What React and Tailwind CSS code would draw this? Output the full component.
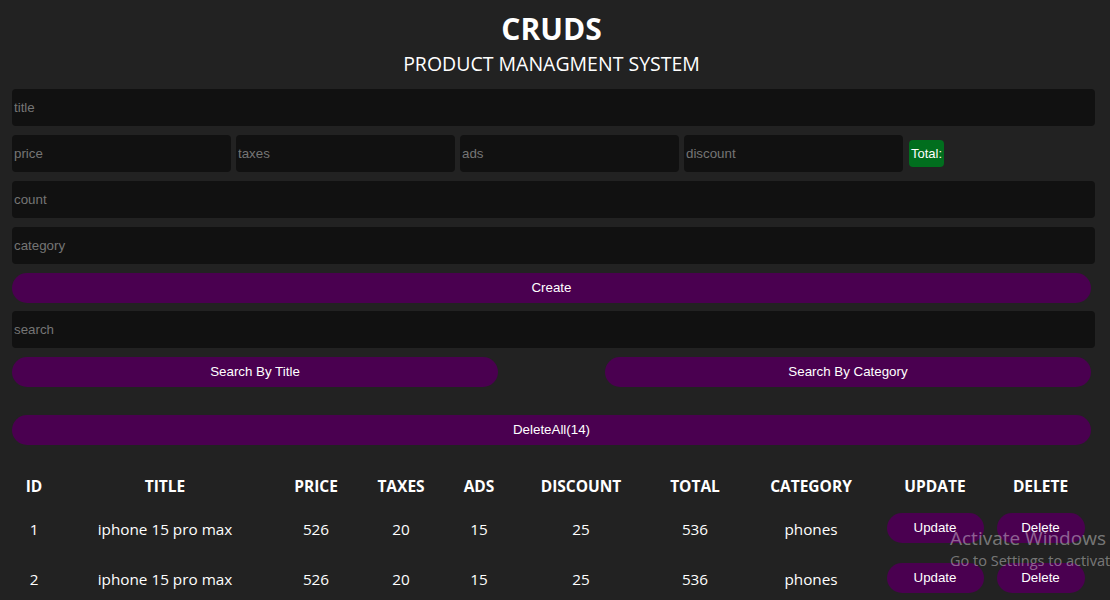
import React from "react";

const cols = [44, 218, 84, 86, 70, 134, 94, 138, 110, 101];
const heads = ["ID", "TITLE", "PRICE", "TAXES", "ADS", "DISCOUNT", "TOTAL", "CATEGORY", "UPDATE", "DELETE"];
const rows = [
  ["1", "iphone 15 pro max", "526", "20", "15", "25", "536", "phones"],
  ["2", "iphone 15 pro max", "526", "20", "15", "25", "536", "phones"],
];

const inputCls =
  "block h-[37px] rounded-[4px] bg-[#111111] pl-[2px] text-[13.33px] text-white outline-none placeholder:text-[#757575] [font-family:'Liberation_Sans',Arial,sans-serif]";
const btnCls =
  "block h-[30px] rounded-[20px] bg-[#4a0050] text-[13.33px] text-white [font-family:'Liberation_Sans',Arial,sans-serif]";

export default function App() {
  return (
    <div className="relative min-h-[600px] w-[1110px] overflow-hidden bg-[#222222] pl-[12px] pr-[19px] text-white [font-family:'Open_Sans',sans-serif]">
      <div className="pt-[10px] text-center">
        <h2 className="text-[30px] font-bold leading-[38px]">CRUDS</h2>
        <p className="mt-[4px] text-[19.5px] leading-[24px]">PRODUCT MANAGMENT SYSTEM</p>
      </div>

      <input className={inputCls + " mt-[13px] w-[1083px]"} placeholder="title" />

      <div className="mt-[9px] flex items-center gap-[5px]">
        <input className={inputCls + " w-[219px]"} placeholder="price" />
        <input className={inputCls + " w-[219px]"} placeholder="taxes" />
        <input className={inputCls + " w-[219px]"} placeholder="ads" />
        <input className={inputCls + " w-[219px]"} placeholder="discount" />
        <div className="ml-[1px] flex h-[27px] w-[35px] items-center justify-center rounded-[4px] bg-[#016e1e] text-[13px] [font-family:'Liberation_Sans',Arial,sans-serif]">
          Total:
        </div>
      </div>

      <input className={inputCls + " mt-[9px] w-[1083px]"} placeholder="count" />
      <input className={inputCls + " mt-[9px] w-[1083px]"} placeholder="category" />

      <button className={btnCls + " mt-[9px] w-full"}>Create</button>

      <input className={inputCls + " mt-[8px] w-[1083px]"} placeholder="search" />

      <div className="mt-[9px] flex justify-between">
        <button className={btnCls + " w-[486px]"}>Search By Title</button>
        <button className={btnCls + " w-[486px]"}>Search By Category</button>
      </div>

      <button className={btnCls + " mt-[28px] w-full"}>DeleteAll(14)</button>

      <table className="mt-[25px] w-full table-fixed border-collapse text-center">
        <colgroup>
          {cols.map((w, i) => (
            <col key={i} style={{ width: w }} />
          ))}
        </colgroup>
        <thead>
          <tr className="h-[34px]">
            {heads.map((h) => (
              <th key={h} className="text-[15.5px] font-bold">
                {h}
              </th>
            ))}
          </tr>
        </thead>
        <tbody>
          {rows.map((r, i) => (
            <tr key={i} className="h-[50px]">
              {r.map((c, j) => (
                <td key={j} className="text-[15.3px]">
                  {c}
                </td>
              ))}
              <td>
                <button className={btnCls + " mx-auto -mt-[2px] w-[97px]"}>Update</button>
              </td>
              <td>
                <button className={btnCls + " mx-auto -mt-[2px] w-[88px]"}>Delete</button>
              </td>
            </tr>
          ))}
        </tbody>
      </table>

      <div className="pointer-events-none absolute left-[950px] top-[525px] whitespace-nowrap text-white/40 [font-family:'Open_Sans',sans-serif]">
        <div className="text-[19px] leading-[26px]">Activate Windows</div>
        <div className="text-[14.5px] leading-[20px]">Go to Settings to activate Windows.</div>
      </div>
    </div>
  );
}
